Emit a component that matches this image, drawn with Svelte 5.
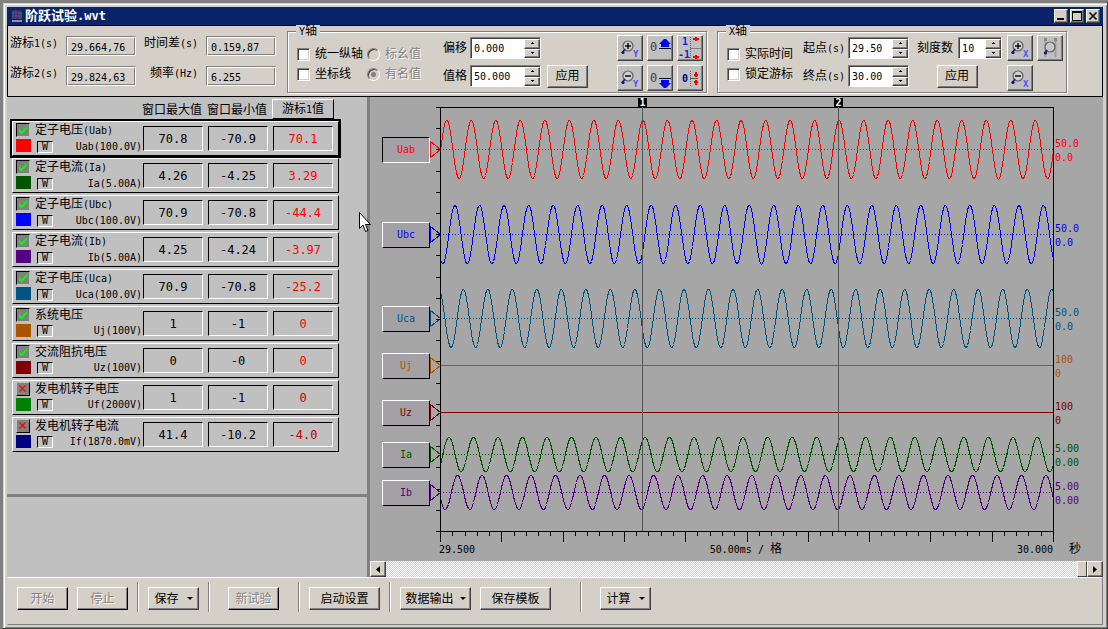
<script lang="ts">
	interface Channel {
		name: string;
		unit: string;
		color: string;
		max: string;
		min: string;
		cursor: string;
		visible: boolean;
	}

	interface Trace {
		id: string;
		color: string;
		y: number;
		amp: number;
		peak: number;
		scale: string;
		zero: string;
	}

	const channels: Channel[] = [
		{ name: '定子电压(Uab)', unit: 'Uab(100.0V)', color: '#ff0000', max: '70.8', min: '-70.9', cursor: '70.1', visible: true },
		{ name: '定子电流(Ia)', unit: 'Ia(5.00A)', color: '#005500', max: '4.26', min: '-4.25', cursor: '3.29', visible: true },
		{ name: '定子电压(Ubc)', unit: 'Ubc(100.0V)', color: '#0000ff', max: '70.9', min: '-70.8', cursor: '-44.4', visible: true },
		{ name: '定子电流(Ib)', unit: 'Ib(5.00A)', color: '#550080', max: '4.25', min: '-4.24', cursor: '-3.97', visible: true },
		{ name: '定子电压(Uca)', unit: 'Uca(100.0V)', color: '#005580', max: '70.9', min: '-70.8', cursor: '-25.2', visible: true },
		{ name: '系统电压', unit: 'Uj(100V)', color: '#aa5500', max: '1', min: '-1', cursor: '0', visible: true },
		{ name: '交流阻抗电压', unit: 'Uz(100V)', color: '#800000', max: '0', min: '-0', cursor: '0', visible: true },
		{ name: '发电机转子电压', unit: 'Uf(2000V)', color: '#008000', max: '1', min: '-1', cursor: '0', visible: false },
		{ name: '发电机转子电流', unit: 'If(1870.0mV)', color: '#000080', max: '41.4', min: '-10.2', cursor: '-4.0', visible: false }
	];

	const traces: Trace[] = [
		{ id: 'Uab', color: '#ff0000', y: 52, amp: 29.5, peak: 6.3, scale: '50.0', zero: '0.0' },
		{ id: 'Ubc', color: '#0000ff', y: 137, amp: 29.5, peak: 14.5, scale: '50.0', zero: '0.0' },
		{ id: 'Uca', color: '#005580', y: 221, amp: 29.5, peak: 22.8, scale: '50.0', zero: '0.0' },
		{ id: 'Uj', color: '#aa5500', y: 268, amp: 0, peak: 0, scale: '100', zero: '0' },
		{ id: 'Uz', color: '#800000', y: 315, amp: 0, peak: 0, scale: '100', zero: '0' },
		{ id: 'Ia', color: '#005500', y: 357, amp: 17.5, peak: 8.4, scale: '5.00', zero: '0.00' },
		{ id: 'Ib', color: '#550080', y: 395, amp: 17.3, peak: 17, scale: '5.00', zero: '0.00' }
	];

	const left = 70;
	const top = 10;
	const bottom = 434;
	const cycles = 25;
	const start = 29.5;
	const span = 0.5;

	const cursors = [
		{ label: '1', time: 29.66476 },
		{ label: '2', time: 29.82463 }
	];

	let selected = $state(0);
	let activeTrace = $state('Uab');
	let chartWidth = $state(733);

	let right = $derived(chartWidth - 50);
	let plotWidth = $derived(right - left);

	const yTicks = Array.from({ length: 21 }, (_, i) => Math.round(top + (i * (bottom - top)) / 20));
	const xTicks = Array.from({ length: 51 }, (_, i) => i);

	const cursorX = (time: number, width: number) => left + Math.round(((time - start) / span) * width);

	const wave = (t: Trace, width: number) => {
		const period = width / cycles;
		let d = '';
		for (let x = 0; x <= width; x += 1) {
			const v = Math.cos((2 * Math.PI * (x - t.peak)) / period);
			d += `${x ? 'L' : 'M'}${left + x + 0.5} ${Math.round(t.y - t.amp * v) + 0.5}`;
		}
		return d;
	};

	// half-width characters are set smaller than the full-width ones
	const pieces = (text: string) => text.match(/[\x20-\x7e]+|[^\x20-\x7e]+/g) ?? [];
	const isHalf = (text: string) => /^[\x20-\x7e]/.test(text);
</script>

{#snippet mixed(text: string)}{#each pieces(text) as part}{#if isHalf(part)}<span class="half">{part}</span>{:else}{part}{/if}{/each}{/snippet}

{#snippet spin(id: string, value: string, size: string)}
	<div class="spin {size}">
		<input {id} type="text" {value} />
		<div class="spin-buttons">
			<button aria-label="+"><svg width="5" height="3" viewBox="0 0 5 3"><path d="M2 0h1v1h1v1H1V1h1z" /></svg></button>
			<button aria-label="-"><svg width="5" height="3" viewBox="0 0 5 3"><path d="M1 0h3v1H3v1H2V1H1z" /></svg></button>
		</div>
	</div>
{/snippet}

{#snippet zoomIcon(sign: string, axis: string)}
	<svg width="24" height="24" viewBox="0 0 24 24">
		<circle cx="10" cy="10" r="5" fill="#d0d0d0" stroke="#606060" stroke-width="1.2" />
		<path d="M7 10h6" stroke="#000" stroke-width="1.4" />
		{#if sign === '+'}<path d="M10 7v6" stroke="#000" stroke-width="1.4" />{/if}
		<path d="M7 13l-3 4" stroke="#202070" stroke-width="1.6" />
		<circle cx="5" cy="16.5" r="1.6" fill="#10108a" />
		<text x="15" y="21" class="axis-letter">{axis}</text>
	</svg>
{/snippet}

<div class="window">
	<header class="title-bar">
		<svg class="app-icon" width="12" height="14" viewBox="0 0 12 14">
			<path d="M1 1h10v9H1z" fill="#26306a" />
			<path d="M2 2v8M5 1v9M8 2v8M10 3v7" stroke="#7a4a70" />
			<path d="M1 4h10M1 7h10" stroke="#4a5590" />
			<path d="M1 12h10" stroke="#8890b0" stroke-width="2" />
		</svg>
		<h1>阶跃试验<span class="title-ext">.wvt</span></h1>
		<button class="win-button" aria-label="最小化"><svg width="12" height="12" viewBox="0 0 12 12"><path d="M2 8h7v2H2z" /></svg></button>
		<button class="win-button" aria-label="最大化"><svg width="12" height="12" viewBox="0 0 12 12"><path d="M1 1h10v10H1zM2 3v7h8V3z" fill-rule="evenodd" /></svg></button>
		<button class="win-button" aria-label="关闭"><svg width="12" height="12" viewBox="0 0 12 12"><path d="M2.5 2.5l7 7M9.5 2.5l-7 7" stroke="#000" stroke-width="1.6" /></svg></button>
	</header>

	<section class="tools">
		<div class="readings">
			<label for="cursor1">{@render mixed('游标1(s)')}</label>
			<input id="cursor1" type="text" value="29.664,76" readonly />
			<label for="delta">{@render mixed('时间差(s)')}</label>
			<input id="delta" type="text" value="0.159,87" readonly />
			<label for="cursor2">{@render mixed('游标2(s)')}</label>
			<input id="cursor2" type="text" value="29.824,63" readonly />
			<label for="freq">{@render mixed('频率(Hz)')}</label>
			<input id="freq" type="text" value="6.255" readonly />
		</div>

		<fieldset class="y-axis">
			<legend>{@render mixed('Y轴')}</legend>
			<div class="options">
				<label><input type="checkbox" />统一纵轴</label>
				<label><input type="checkbox" />坐标线</label>
			</div>
			<div class="options radios">
				<label><input type="radio" name="unit" disabled />标幺值</label>
				<label><input type="radio" name="unit" checked disabled />有名值</label>
			</div>
			<div class="fields">
				<label for="offset">偏移</label>
				{@render spin('offset', '0.000', 'large')}
				<span></span>
				<label for="scale">值格</label>
				{@render spin('scale', '50.000', 'large')}
				<button class="button apply">应用</button>
			</div>
			<div class="icons">
				<button class="icon-button" aria-label="Y轴放大">{@render zoomIcon('+', 'Y')}</button>
				<button class="icon-button" aria-label="上移">
					<svg width="24" height="24" viewBox="0 0 24 24">
						<text x="2" y="15" class="zero">0</text>
						<path d="M11 12.5h12" stroke="#000" />
						<path d="M16 3h2l5 5h-2v3h-8V8h-2z" fill="#0000ff" />
					</svg>
				</button>
				<button class="icon-button" aria-label="满幅">
					<svg width="24" height="24" viewBox="0 0 24 24">
						<text x="4" y="9" class="blue">1</text>
						<text x="0" y="22" class="blue">-1</text>
						<path d="M12.5 1v22" stroke="#606060" stroke-dasharray="1 1" />
						<path d="M12 12.5h11" stroke="#808080" />
						<path d="M17 1h2v1h2v2h-2v1h-2V4h-2V2h2zM17 19h2v1h2v2h-2v1h-2v-1h-2v-2h2z" fill="#ff0000" />
					</svg>
				</button>
				<button class="icon-button" aria-label="Y轴缩小">{@render zoomIcon('-', 'Y')}</button>
				<button class="icon-button" aria-label="下移">
					<svg width="24" height="24" viewBox="0 0 24 24">
						<text x="2" y="16" class="zero">0</text>
						<path d="M11 12.5h12" stroke="#000" />
						<path d="M13 14h8v3h2l-5 5h-2l-5-5h2z" fill="#0000ff" />
					</svg>
				</button>
				<button class="icon-button" aria-label="居中">
					<svg width="24" height="24" viewBox="0 0 24 24">
						<text x="4" y="16" class="navy">0</text>
						<path d="M12.5 5v15" stroke="#606060" stroke-dasharray="1 1" />
						<path d="M12 12.5h8" stroke="#606060" />
						<path d="M17 6h2v2h1v2h-1v1h-2v-1h-1V8h1zM17 14h2v1h1v2h-1v2h-2v-2h-1v-2h1z" fill="#ff0000" />
					</svg>
				</button>
			</div>
		</fieldset>

		<fieldset class="x-axis">
			<legend>{@render mixed('X轴')}</legend>
			<div class="options">
				<label><input type="checkbox" />实际时间</label>
				<label><input type="checkbox" />锁定游标</label>
			</div>
			<div class="fields">
				<label for="from">{@render mixed('起点(s)')}</label>
				{@render spin('from', '29.50', 'medium')}
				<label class="divisions" for="divisions">刻度数</label>
				{@render spin('divisions', '10', 'small')}
				<label for="to">{@render mixed('终点(s)')}</label>
				{@render spin('to', '30.00', 'medium')}
				<button class="button apply centered">应用</button>
			</div>
			<div class="icons">
				<button class="icon-button" aria-label="X轴放大">{@render zoomIcon('+', 'X')}</button>
				<button class="icon-button" aria-label="游标间放大">
					<svg width="24" height="24" viewBox="0 0 24 24">
						<path d="M7.5 3v18M17.5 3v18" stroke="#a0a0a0" stroke-width="2" />
						<path d="M6 2h3v3H6zM16 2h3v3h-3z" fill="#888" />
						<circle cx="12" cy="11" r="5" fill="#c8c8c8" stroke="#606060" stroke-width="1.2" />
						<path d="M9 14l-2 3" stroke="#202070" stroke-width="1.6" />
						<circle cx="7.5" cy="17" r="1.6" fill="#10108a" />
					</svg>
				</button>
				<button class="icon-button" aria-label="X轴缩小">{@render zoomIcon('-', 'X')}</button>
			</div>
		</fieldset>
	</section>

	<main>
		<aside>
			<div class="channels">
				<div class="channel-head">
					<span>窗口最大值</span>
					<span>窗口最小值</span>
					<button class="cursor-value">{@render mixed('游标1值')}</button>
				</div>
				{#each channels as ch, i}
					<div
						class="channel"
						class:selected={selected === i}
						class:hidden-trace={!ch.visible}
						onclick={() => (selected = i)}
						onkeydown={(e) => e.key === 'Enter' && (selected = i)}
						role="button"
						tabindex="0"
					>
						<div class="marks">
							<span class="flag" class:off={!ch.visible}>
								<svg width="12" height="12" viewBox="0 0 12 12">
									{#if ch.visible}
										<path d="M2 5v3l2.5 2.5L10 4.5V2L4.5 7.5z" fill="#00ff00" />
									{:else}
										<path d="M2.5 2.5l6 6M8.5 2.5l-6 6" stroke="#ff0000" stroke-width="1.2" />
									{/if}
								</svg>
							</span>
							<span class="swatch" style="background: {ch.color};"></span>
						</div>
						<div class="names">
							<div class="name">{@render mixed(ch.name)}</div>
							<div class="unit"><button class="w-button">W</button><span class="half">{ch.unit}</span></div>
						</div>
						<div class="value">{ch.max}</div>
						<div class="value">{ch.min}</div>
						<div class="value at-cursor">{ch.cursor}</div>
					</div>
				{/each}
			</div>
			<div class="notes"></div>
			<svg class="pointer" width="13" height="21" viewBox="0 0 13 21">
				<path d="M.5.5v16l3.5-3.5 2.5 6.5 2.5-1-2.5-6h5z" fill="#fff" stroke="#000" />
			</svg>
		</aside>

		<section class="chart-pane">
			<div class="chart" bind:clientWidth={chartWidth}>
				<svg width="100%" height="464">
					{#each traces as t}
						{#if t.amp}
							<path class="dotted" d="M{left} {t.y + 0.5}H{right}" stroke={t.color} />
							<path class="trace" d={wave(t, plotWidth)} stroke={t.color} />
						{:else}
							<path class="trace" d="M{left} {t.y + 0.5}H{right}" stroke={t.color} />
						{/if}
						<path class="arrow" d="M60.5 {t.y - 7.5}v16l10-8z" stroke={t.color} />
						<text x={right + 2} y={t.y - 2} fill={t.color}>{t.scale}</text>
						<text x={right + 2} y={t.y + 12} fill={t.color}>{t.zero}</text>
					{/each}

					<path class="axis" d="M{left - 4} {top + 0.5}H{right + 0.5}V{bottom + 10}M{left + 0.5} {top}V{bottom + 10}M{left - 4} {bottom + 0.5}H{right}" />
					{#each yTicks as y}
						<path class="axis" d="M{left - 4} {y + 0.5}h4" />
					{/each}
					{#each xTicks as i}
						<path class="axis" d="M{Math.round(left + (i * plotWidth) / 50) + 0.5} {bottom}v{i % 5 ? 5 : 11}" />
					{/each}

					{#each cursors as c}
						{@const x = cursorX(c.time, plotWidth)}
						<path d="M{x + 0.5} {top}V{bottom}" stroke="#555" />
						<rect x={x - 4} y="1" width="9" height="9" fill="#000" />
						<text class="cursor-no" x={x + 0.5} y="9">{c.label}</text>
					{/each}

					<text x={left - 1} y="456">29.500</text>
					<text x={left + plotWidth * 0.44} y="456">50.00ms / <tspan class="full">格</tspan></text>
					<text x={right} y="456" text-anchor="end">30.000</text>
					<text class="full" x={right + 16} y="456">秒</text>
				</svg>
				{#each traces as t}
					<button
						class="trace-label"
						class:active={activeTrace === t.id}
						style="top: {t.y - 12}px; color: {t.color};"
						onclick={() => (activeTrace = t.id)}>{t.id}</button
					>
				{/each}
			</div>
			<div class="scrollbar">
				<button class="scroll-button" aria-label="向左"><svg width="4" height="7" viewBox="0 0 4 7"><path d="M4 0v7L0 3.5z" /></svg></button>
				<div class="track"><span class="thumb"></span></div>
				<button class="scroll-button" aria-label="向右"><svg width="4" height="7" viewBox="0 0 4 7"><path d="M0 0v7l4-3.5z" /></svg></button>
			</div>
		</section>
	</main>

	<footer>
		<button class="button hard" disabled>开始</button>
		<button class="button hard" disabled>停止</button>
		<span class="separator"></span>
		<button class="button">保存<span class="caret"></span></button>
		<span class="separator space-after"></span>
		<button class="button hard" disabled>新试验</button>
		<span class="separator space-before"></span>
		<button class="button wide">启动设置</button>
		<span class="separator"></span>
		<button class="button wide menu">数据输出<span class="caret"></span></button>
		<button class="button wide">保存模板</button>
		<span class="separator far-before space-after"></span>
		<button class="button">计算<span class="caret"></span></button>
	</footer>
</div>

<style>
	:global(body) {
		margin: 0;
		background: #808080;
	}

	.window {
		box-sizing: border-box;
		min-height: 100vh;
		display: flex;
		flex-direction: column;
		padding: 4px 4px 3px;
		border: solid;
		border-width: 3px 1px 1px 3px;
		border-color: #808080 #404040 #404040 #808080;
		background: #d4d0c8;
		box-shadow: inset 1px 1px #d4d0c8, inset 2px 2px #fff, inset -1px -1px #808080;
		font-family: 'DejaVu Sans Mono', 'Noto Sans CJK SC', monospace;
		font-size: 12px;
		line-height: 14px;
		color: #000;
	}

	button,
	input {
		font: inherit;
		color: inherit;
	}

	button {
		box-sizing: border-box;
		margin: 0;
		padding: 0;
		border-radius: 0;
		background: #d4d0c8;
		border: 1px solid;
		border-color: #fff #404040 #404040 #fff;
		box-shadow: inset -1px -1px #808080;
	}

	svg {
		display: block;
	}

	.half {
		font-size: 10px;
	}

	/* title bar */
	.title-bar {
		display: flex;
		align-items: center;
		gap: 2px;
		height: 18px;
		padding: 0 3px 0 4px;
		background: #0a246a;
	}

	h1 {
		flex: 1;
		margin: 0;
		font-size: 13px;
		line-height: 18px;
		font-weight: bold;
		color: #fff;
	}

	.title-ext {
		font-size: 12px;
	}

	.win-button {
		width: 14px;
		height: 14px;
	}

	/* top tool area */
	.tools {
		display: flex;
		gap: 10px;
		height: 70px;
		border: 1px solid #000;
		padding-right: 35px;
	}

	.readings {
		flex: 1;
		display: grid;
		grid-template-columns: 48px 70px 54px 70px;
		grid-auto-rows: 20px;
		gap: 10px 8px;
		align-content: center;
		padding-left: 2px;
	}

	.readings label {
		text-align: right;
		white-space: nowrap;
	}

	.readings input {
		box-sizing: border-box;
		width: 70px;
		height: 20px;
		padding: 2px 4px 0;
		border: 1px solid;
		border-color: #808080 #fff #fff #808080;
		box-shadow: inset 1px 1px #fff, inset -1px -1px #808080;
		background: #d4d0c8;
		font-size: 10px;
		outline: 0;
	}

	fieldset {
		position: relative;
		box-sizing: border-box;
		display: flex;
		gap: 10px;
		align-items: flex-start;
		margin: 5px 0 3px;
		padding: 3px 3px 0 9px;
		border: 1px solid #808080;
		box-shadow: 1px 1px #fff, inset 1px 1px #fff;
		min-width: 0;
	}

	.y-axis {
		flex: 0 0 420px;
	}

	.x-axis {
		flex: 0 0 350px;
		gap: 5px;
	}

	legend {
		position: absolute;
		top: -7px;
		left: 8px;
		padding: 0 3px;
		background: #d4d0c8;
		line-height: 12px;
	}

	.options {
		display: flex;
		flex-direction: column;
		gap: 6px;
		padding-top: 12px;
	}

	.x-axis .options {
		margin-right: 5px;
	}

	.options label {
		display: flex;
		gap: 5px;
		align-items: center;
		white-space: nowrap;
	}

	.options.radios {
		margin: 0 12px 0 -6px;
		color: #808080;
		text-shadow: 1px 1px #fff;
	}

	input[type='checkbox'],
	input[type='radio'] {
		appearance: none;
		box-sizing: border-box;
		width: 13px;
		height: 13px;
		margin: 0;
		background: #fff;
		border: 1px solid;
		border-color: #808080 #fff #fff #808080;
		box-shadow: inset 1px 1px #404040, inset -1px -1px #d4d0c8;
	}

	input[type='radio'] {
		border-radius: 50%;
		background: #d4d0c8;
	}

	input[type='radio']:checked {
		background: radial-gradient(circle, #808080 2px, #d4d0c8 3px);
	}

	.fields {
		display: grid;
		grid-template-columns: auto auto auto;
		grid-auto-rows: 22px;
		gap: 6px 3px;
		align-items: center;
		padding-top: 2px;
		white-space: nowrap;
	}

	.x-axis .fields {
		grid-template-columns: auto auto auto auto;
	}

	.divisions {
		padding: 0 2px 0 5px;
	}

	.spin {
		box-sizing: border-box;
		display: flex;
		height: 22px;
		border: 1px solid;
		border-color: #808080 #fff #fff #808080;
		box-shadow: inset 1px 1px #404040;
		background: #fff;
		padding: 1px 0 0 1px;
	}

	.spin.large {
		width: 71px;
	}

	.spin.medium {
		width: 61px;
	}

	.spin.small {
		width: 44px;
	}

	.spin input {
		flex: 1;
		min-width: 0;
		padding: 0 0 0 2px;
		border: 0;
		background: none;
		font-size: 10px;
		outline: 0;
	}

	.spin-buttons {
		display: flex;
		flex-direction: column;
		width: 16px;
	}

	.spin-buttons button {
		flex: 1;
		display: flex;
		align-items: center;
		justify-content: center;
	}

	.button {
		height: 23px;
		min-width: 51px;
		display: flex;
		align-items: center;
		justify-content: center;
	}

	.button.apply {
		min-width: 41px;
		margin-left: 3px;
	}

	.button.centered {
		grid-column: span 2;
		justify-self: center;
		margin-left: 0;
	}

	.icons {
		display: grid;
		grid-template-columns: repeat(3, 26px);
		gap: 4px;
		margin-left: auto;
	}

	.x-axis .icons {
		grid-template-columns: repeat(2, 26px);
	}

	.icon-button {
		width: 26px;
		height: 26px;
		background: #c0c0c0;
	}

	.axis-letter {
		font-size: 9px;
		font-weight: bold;
		fill: #5050f0;
	}

	.zero {
		font-size: 12px;
		fill: #404040;
	}

	.blue,
	.navy {
		font-size: 10px;
		font-weight: bold;
		fill: #1020e0;
	}

	.navy {
		fill: #000080;
	}

	/* channel list */
	main {
		flex: 1;
		display: flex;
	}

	aside {
		position: relative;
		box-sizing: border-box;
		flex: 0 0 363px;
		display: flex;
		flex-direction: column;
		border-right: 3px solid #808080;
		background: #c0c0c0;
	}

	.channels {
		flex: 1;
		padding: 2px 26px 0 3px;
	}

	.notes {
		height: 80px;
		border-top: 3px solid #808080;
	}

	.channel-head {
		display: flex;
		gap: 5px;
		justify-content: flex-end;
		padding-right: 7px;
		line-height: 22px;
	}

	.channel-head span {
		width: 60px;
		white-space: nowrap;
	}

	.cursor-value {
		width: 62px;
		height: 20px;
		line-height: 18px;
		background: #c0c0c0;
		border-color: #fff #000 #000 #fff;
		box-shadow: none;
	}

	.channel {
		box-sizing: border-box;
		display: flex;
		gap: 5px;
		height: 35px;
		margin: 0 2px 2px;
		padding: 1px 5px 1px 3px;
		border: 1px solid;
		border-color: #fff #000 #000 #fff;
	}

	.channel.selected {
		outline: 2px solid #000;
	}

	.marks {
		display: flex;
		flex-direction: column;
		gap: 2px;
		width: 15px;
	}

	.flag {
		width: 12px;
		height: 12px;
		border: 1px solid;
		border-color: #000 #c0c0c0 #c0c0c0 #000;
		background: #808080;
	}

	.flag.off {
		border-color: #c0c0c0 #000 #000 #c0c0c0;
	}

	.swatch {
		height: 13px;
	}

	.names {
		flex: 1;
		margin: 0 -4px 0 -1px;
	}

	.name {
		line-height: 14px;
		white-space: nowrap;
	}

	.unit {
		display: flex;
		justify-content: space-between;
		align-items: center;
		padding: 2px 0 0 2px;
	}

	.w-button {
		width: 16px;
		height: 12px;
		background: #c0c0c0;
		border-color: #000 #fff #fff #000;
		box-shadow: none;
		font-size: 10px;
		line-height: 10px;
	}

	.value {
		box-sizing: border-box;
		width: 60px;
		height: 25px;
		margin-top: 3px;
		border: 1px solid;
		border-color: #000 #fff #fff #000;
		text-align: center;
		line-height: 24px;
	}

	.at-cursor {
		color: #ff0000;
	}

	.hidden-trace .at-cursor {
		color: #c00000;
	}

	.pointer {
		position: absolute;
		left: 352px;
		top: 115px;
	}

	/* chart */
	.chart-pane {
		flex: 1;
		min-width: 0;
		display: flex;
		flex-direction: column;
		background: #a6a6a6;
	}

	.chart {
		position: relative;
		flex: 1;
	}

	.chart text {
		font-size: 10px;
	}

	.chart .full {
		font-size: 12px;
	}

	.chart .cursor-no {
		fill: #fff;
		font-weight: bold;
		text-anchor: middle;
	}

	.trace,
	.dotted,
	.axis,
	.arrow {
		fill: none;
		shape-rendering: crispEdges;
	}

	.dotted {
		stroke-dasharray: 1 2;
	}

	.axis {
		stroke: #000;
	}

	.trace-label {
		position: absolute;
		left: 12px;
		width: 48px;
		height: 26px;
		background: #a4a1a6;
		border-color: #fff #000 #000 #fff;
		box-shadow: none;
		font-size: 10px;
	}

	.trace-label.active {
		border-color: #000 #fff #fff #000;
	}

	.scrollbar {
		display: flex;
		height: 16px;
	}

	.scroll-button {
		display: flex;
		align-items: center;
		justify-content: center;
		width: 16px;
	}

	.track {
		flex: 1;
		display: flex;
		justify-content: flex-end;
		background: repeating-conic-gradient(#fff 0 25%, #d4d0c8 0 50%) 0 0 / 2px 2px;
	}

	.thumb {
		box-sizing: border-box;
		width: 10px;
		border: 1px solid;
		border-color: #fff #404040 #404040 #fff;
		background: #d4d0c8;
	}

	/* bottom buttons */
	footer {
		box-sizing: border-box;
		display: flex;
		gap: 9px;
		height: 48px;
		padding: 9px;
		border: 1px solid;
		border-color: #fff #808080 #808080 #d4d0c8;
	}

	.button.hard {
		border-color: #fff #000 #000 #fff;
	}

	.button:disabled {
		color: #808080;
		text-shadow: 1px 1px #fff;
	}

	.button.wide {
		min-width: 71px;
	}

	.separator {
		width: 2px;
		height: 30px;
		margin-top: -5px;
		background: linear-gradient(90deg, #808080 1px, #fff 1px);
	}

	.space-before {
		margin-left: 10px;
	}

	.far-before {
		margin-left: 20px;
	}

	.space-after {
		margin-right: 9px;
	}

	.caret {
		margin-left: 8px;
		border: 3px solid transparent;
		border-top-color: #000;
		border-bottom: 0;
	}

	.menu .caret {
		margin-left: 6px;
	}
</style>
